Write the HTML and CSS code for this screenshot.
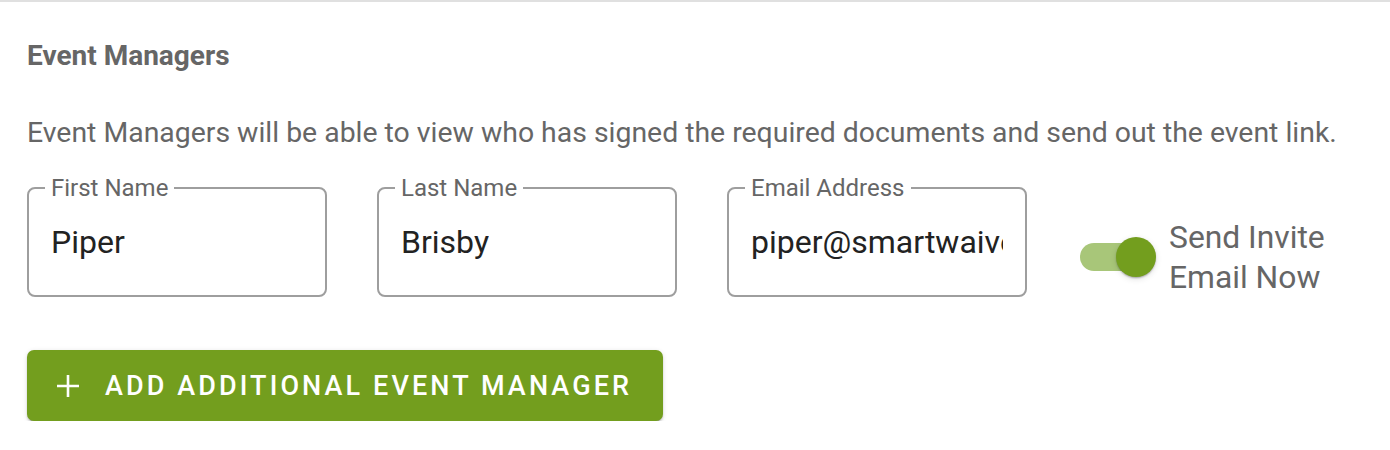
FILE: index.html
```html
<!DOCTYPE html>
<html>
<head>
    <title>Event Managers</title>
    <link rel="stylesheet" href="styles.css">
</head>
<body>
    <div class="section">
        <h2 class="section-title">Event Managers</h2>
        <p class="section-desc">Event Managers will be able to view who has signed the required documents and send out the event link.</p>

        <div class="manager-row">
            <div class="field">
                <span class="field-label">First Name</span>
                <div class="field-value">Piper</div>
            </div>
            <div class="field">
                <span class="field-label">Last Name</span>
                <div class="field-value">Brisby</div>
            </div>
            <div class="field">
                <span class="field-label">Email Address</span>
                <div class="field-value">piper@smartwaiver.com</div>
            </div>
            <div class="invite">
                <div class="switch">
                    <div class="switch-track"></div>
                    <div class="switch-thumb"></div>
                </div>
                <div class="invite-label">Send Invite<br>Email Now</div>
            </div>
        </div>

        <button class="add-btn">
            <svg class="add-icon" viewBox="0 0 22 22" width="22" height="22">
                <path d="M11 0v22M0 11h22" stroke="#fff" stroke-width="2.6" fill="none"/>
            </svg>
            <span>ADD ADDITIONAL EVENT MANAGER</span>
        </button>
    </div>
</body>
</html>
```

FILE: styles.css
```css
body {
    margin: 0;
    background-color: #fff;
    font-family: Roboto, "Noto Sans", sans-serif;
    color: #666;
}

.section {
    border-top: 2px solid #e0e0e0;
    padding: 0 27px;
}

.section-title {
    margin: 0;
    padding-top: 38px;
    font-size: 28px;
    font-weight: 700;
    line-height: 32px;
    color: #666;
}

.section-desc {
    margin: 43px 0 0;
    font-size: 28.4px;
    line-height: 36px;
    color: #666;
    white-space: nowrap;
}

.manager-row {
    display: flex;
    align-items: center;
    gap: 50px;
    margin-top: 36px;
}

.field {
    position: relative;
    flex: none;
    width: 300px;
    height: 110px;
    box-sizing: border-box;
    border: 2px solid #9e9e9e;
    border-radius: 8px;
    padding: 0 22px;
    display: flex;
    align-items: center;
}

.field-label {
    position: absolute;
    top: -16px;
    left: 16px;
    padding: 0 6px;
    background: #fff;
    font-size: 24px;
    line-height: 30px;
    color: #666;
}

.field-value {
    font-size: 32px;
    color: #222;
    white-space: nowrap;
    overflow: hidden;
}

.invite {
    display: flex;
    align-items: center;
    margin-left: 3px;
    margin-top: 30px;
}

.switch {
    position: relative;
    width: 76px;
    height: 40px;
    margin-right: 13px;
}

.switch-track {
    position: absolute;
    left: 0;
    top: 6px;
    width: 70px;
    height: 28px;
    border-radius: 14px;
    background: #a8c679;
}

.switch-thumb {
    position: absolute;
    left: 36px;
    top: 0;
    width: 40px;
    height: 40px;
    border-radius: 50%;
    background: #739e1e;
    box-shadow: 0 2px 2px -1px rgba(0,0,0,0.2), 0 1px 2px rgba(0,0,0,0.14), 0 2px 6px rgba(0,0,0,0.12);
}

.invite-label {
    font-size: 31.8px;
    line-height: 40px;
    color: #666;
}

.add-btn {
    display: flex;
    align-items: center;
    margin-top: 53px;
    width: 636px;
    height: 71px;
    padding: 0 0 0 30px;
    border: none;
    border-radius: 7px;
    background-color: #739e1e;
    color: #fff;
    font-family: Roboto, "Noto Sans", sans-serif;
    font-size: 27px;
    font-weight: 500;
    letter-spacing: 3.1px;
    box-shadow: 0 3px 1px -2px rgba(0,0,0,0.2), 0 2px 2px rgba(0,0,0,0.14), 0 1px 5px rgba(0,0,0,0.12);
}

.add-icon {
    width: 22px;
    height: 22px;
    margin-right: 26px;
}
```
